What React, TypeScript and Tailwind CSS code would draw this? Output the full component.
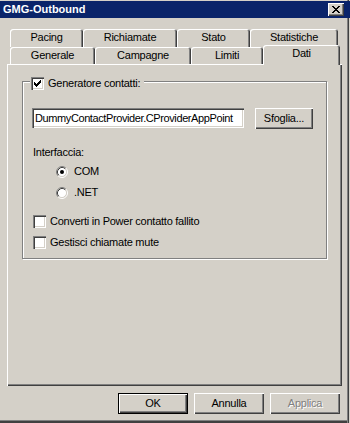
import React from "react";

const raisedBtn =
  "bg-[#d4d0c8] shadow-[inset_1px_1px_0_#ffffff,inset_-1px_-1px_0_#404040,inset_-2px_-2px_0_#808080]";
const sunken =
  "shadow-[inset_1px_1px_0_#808080,inset_2px_2px_0_#404040,inset_-1px_-1px_0_#ffffff,inset_-2px_-2px_0_#d4d0c8]";

function CheckBox({ checked }: { checked?: boolean }) {
  return (
    <div className={`w-[13px] h-[13px] bg-white ${sunken} flex items-center justify-center shrink-0`}>
      {checked && (
        <svg width="7" height="7" viewBox="0 0 7 7" shapeRendering="crispEdges">
          <path
            d="M0 2h1v3h-1z M1 3h1v3h-1z M2 4h1v3h-1z M3 3h1v3h-1z M4 2h1v3h-1z M5 1h1v3h-1z M6 0h1v3h-1z"
            fill="#000"
          />
        </svg>
      )}
    </div>
  );
}

function Radio({ checked }: { checked?: boolean }) {
  return (
    <svg width="12" height="12" viewBox="0 0 12 12" className="shrink-0">
      <circle cx="6" cy="6" r="4.5" fill="#ffffff" />
      <path d="M2.11 9.89 A5.5 5.5 0 0 1 9.89 2.11" stroke="#808080" strokeWidth="1" fill="none" />
      <path d="M9.89 2.11 A5.5 5.5 0 0 1 2.11 9.89" stroke="#ffffff" strokeWidth="1" fill="none" />
      <path d="M2.82 9.18 A4.5 4.5 0 0 1 9.18 2.82" stroke="#404040" strokeWidth="1" fill="none" />
      <path d="M9.18 2.82 A4.5 4.5 0 0 1 2.82 9.18" stroke="#d4d0c8" strokeWidth="1" fill="none" />
      {checked && <circle cx="6" cy="6" r="2" fill="#000" />}
    </svg>
  );
}

const tabShadow =
  "bg-[#d4d0c8] rounded-t-[3px] shadow-[inset_1px_1px_0_#ffffff,inset_-1px_0_0_#404040,inset_-2px_0_0_#808080]";

const row1 = [
  { l: "Pacing", c: "w-[73px]" },
  { l: "Richiamate", c: "w-[94px]" },
  { l: "Stato", c: "w-[73px]" },
  { l: "Statistiche", c: "w-[88px]" },
];
const row2 = [
  { l: "Generale", c: "w-[85px]" },
  { l: "Campagne", c: "w-[96px]" },
  { l: "Limiti", c: "w-[72px]" },
];

export default function App() {
  return (
    <div className="w-[350px] h-[423px] bg-[#d4d0c8] flex flex-col overflow-hidden text-[11px] leading-[13px] text-black tracking-[-0.25px] font-['Liberation_Sans',Arial,sans-serif] shadow-[inset_-1px_0_0_#d4d0c8,inset_-2px_0_0_#404040,inset_-3px_0_0_#808080,inset_0_-2px_0_#404040,inset_0_-3px_0_#808080]">
      {/* Title bar */}
      <div className="mt-[1px] h-[17px] bg-[#0a246a] flex items-center justify-between pl-[3px] pr-[6px] shrink-0">
        <span className="text-white font-bold tracking-normal">GMG-Outbound</span>
        <div className={`w-[16px] h-[13px] ${raisedBtn} flex items-center justify-center`}>
          <svg width="8" height="7" viewBox="0 0 8 7" shapeRendering="crispEdges" className="-mt-[1px] -ml-[1px]">
            <path
              d="M0 0h2v1h-2z M6 0h2v1h-2z M1 1h2v1h-2z M5 1h2v1h-2z M2 2h4v1h-4z M3 3h2v1h-2z M2 4h4v1h-4z M1 5h2v1h-2z M5 5h2v1h-2z M0 6h2v1h-2z M6 6h2v1h-2z"
              fill="#000"
            />
          </svg>
        </div>
      </div>

      {/* Tabs */}
      <div className="mt-[11px] ml-[10px] flex h-[18px] shrink-0">
        {row1.map((t) => (
          <div key={t.l} className={`${t.c} h-[18px] ${tabShadow} flex justify-center pt-[2px]`}>
            {t.l}
          </div>
        ))}
      </div>
      <div className="ml-[10px] flex items-start h-[17px] shrink-0">
        {row2.map((t) => (
          <div key={t.l} className={`${t.c} h-[17px] ${tabShadow} flex justify-center pt-[2px]`}>
            {t.l}
          </div>
        ))}
        <div className={`relative z-10 w-[77px] -mt-[2px] h-[20px] ${tabShadow} flex justify-center pt-[2px]`}>
          Dati
        </div>
      </div>

      {/* Panel */}
      <div className="ml-[7px] w-[335px] h-[322px] shrink-0 flex flex-col shadow-[inset_1px_1px_0_#ffffff,inset_-1px_-1px_0_#404040,inset_-2px_-2px_0_#808080]">
        <div className="relative mt-[17px] ml-[15px] w-[305px] h-[178px] border border-[#808080] shadow-[inset_1px_1px_0_#ffffff,1px_1px_0_#ffffff] flex flex-col pl-[9px] pt-[26px]">
          <div className="absolute -top-[5px] left-[7px] pl-[1px] pr-[4px] bg-[#d4d0c8] flex items-center gap-[4px] h-[13px]">
            <CheckBox checked />
            <span>Generatore contatti:</span>
          </div>

          <div className="flex items-start">
            <div className={`w-[212px] h-[20px] bg-white ${sunken} flex items-center pl-[3px] overflow-hidden whitespace-nowrap tracking-[-0.4px]`}>
              DummyContactProvider.CProviderAppPoint
            </div>
            <div className={`ml-[11px] w-[58px] h-[21px] ${raisedBtn} flex items-center justify-center`}>
              Sfoglia...
            </div>
          </div>

          <div className="mt-[17px] ml-[1px] h-[13px]">Interfaccia:</div>

          <div className="mt-[6px] ml-[24px] h-[13px] flex items-center gap-[6px]">
            <Radio checked />
            <span>COM</span>
          </div>
          <div className="mt-[8px] ml-[24px] h-[13px] flex items-center gap-[6px]">
            <Radio />
            <span>.NET</span>
          </div>

          <div className="mt-[16px] ml-[1px] h-[13px] flex items-center gap-[4px]">
            <CheckBox />
            <span>Converti in Power contatto fallito</span>
          </div>
          <div className="mt-[8px] ml-[1px] h-[13px] flex items-center gap-[4px]">
            <CheckBox />
            <span>Gestisci chiamate mute</span>
          </div>
        </div>
      </div>

      {/* Buttons */}
      <div className="mt-[7px] flex justify-end gap-[6px] pr-[10px] shrink-0">
        <div className={`w-[70px] h-[21px] border border-black ${raisedBtn} flex items-center justify-center`}>
          OK
        </div>
        <div className={`w-[70px] h-[21px] ${raisedBtn} flex items-center justify-center`}>Annulla</div>
        <div className={`w-[70px] h-[21px] ${raisedBtn} flex items-center justify-center text-[#808080] [text-shadow:1px_1px_0_#ffffff]`}>
          Applica
        </div>
      </div>
    </div>
  );
}
